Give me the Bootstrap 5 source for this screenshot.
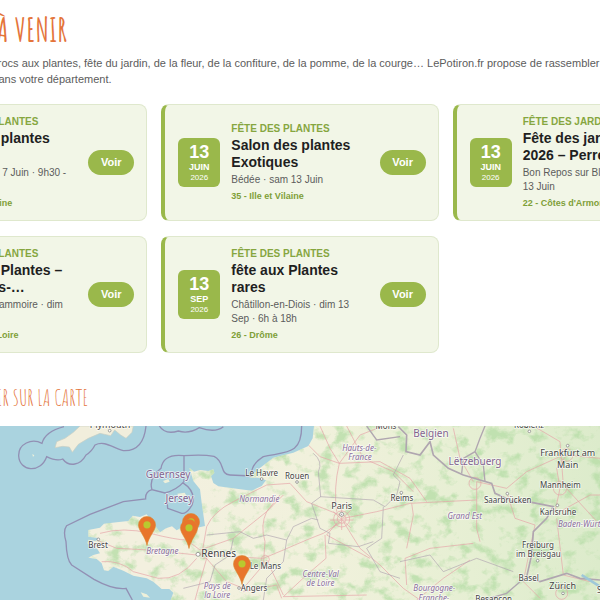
<!DOCTYPE html>
<html lang="fr">
<head>
<meta charset="utf-8">
<meta name="viewport" content="width=device-width, initial-scale=1">
<title>Fêtes des plantes à venir</title>
<link href="https://cdn.jsdelivr.net/npm/bootstrap@5.3.0/dist/css/bootstrap.min.css" rel="stylesheet">
<style>
body{font-family:"Liberation Sans",Arial,sans-serif;color:#5c5c5c;background:#fff}
.agenda{margin:0 -130px}
.display-title{font-family:"Amatic SC","Liberation Sans",sans-serif;color:#e4743a;text-transform:uppercase;text-align:right;white-space:nowrap}
h1.display-title{font-size:33px;line-height:32px;font-weight:700;margin:13px 0 10px;width:197px}
h2.display-title{font-size:22px;line-height:26px;font-weight:400;margin:32px 0 15px;width:218px}
.intro{font-size:11px;line-height:16px;margin:0 0 17px;white-space:nowrap}
.events{display:grid;grid-template-columns:repeat(3,minmax(0,1fr));gap:15px 14px}
.event{background:#f2f6e7;border:1px solid #dfe8cd;border-left:4px solid #9ab84b;border-radius:8px;padding:10px 12px 10px 13px;min-height:117px;gap:11px}
.event-text{white-space:nowrap}
.event-date{width:42px;height:49px;border-radius:6px;background:#9ab84b;color:#fff;flex:none}
.day{font-size:18px;line-height:20px;font-weight:700}
.month{font-size:9px;line-height:11px;font-weight:700}
.year{font-size:8px;line-height:10px}
.kind{font-size:10px;line-height:13px;font-weight:700;color:#86a63f;margin-bottom:2px}
.event h3{font-size:14px;line-height:17px;font-weight:700;color:#1f1f1f;margin:0 0 2px}
.meta{font-size:10px;line-height:14px;margin-bottom:3px}
.dept{font-size:9px;line-height:13px;font-weight:700;color:#7f9f38}
.btn-see{background:#9ab84b;color:#fff;font-size:11px;line-height:17px;font-weight:700;padding:4px 12px;border:0;border-radius:13px;flex:none;width:46px}
.map{background:#aad3df;min-height:174px}
.map-art{min-height:174px}
.map-art text{font-family:"Noto Sans",sans-serif;font-size:27px;fill:#444;text-anchor:middle;paint-order:stroke;stroke:#fff;stroke-opacity:.7;stroke-width:5px;stroke-linejoin:round}
.map-art .region{font-style:italic;fill:#8b6f9c;font-size:24px}
.map-art .country{fill:#83648f;font-size:30px}
.map-art .city{font-size:30px}
.map-art .town{font-size:24px}
.road{fill:none;stroke:#e6a3a8;stroke-width:2}
.frontier{fill:none;stroke:#b0a6b0;stroke-width:3}
.maritime{fill:none;stroke:#9290b4;stroke-width:4}
.pin{position:absolute;width:18px;height:30px;padding:0;border:0;background:none}
.pin svg{display:block;width:18px;height:30px}
</style>
<script src="https://cdn.jsdelivr.net/npm/bootstrap@5.3.0/dist/js/bootstrap.bundle.min.js"></script>
</head>
<body class="d-flex flex-column min-vh-100 overflow-hidden">
<main class="agenda">
  <h1 class="display-title">Fêtes à venir</h1>
  <p class="intro">Bourse, fête des plantes, trocs aux plantes, fête du jardin, de la fleur, de la confiture, de la pomme, de la courge… LePotiron.fr propose de rassembler<br>les événements proches dans votre département.</p>
  <section class="events">
    <article class="event d-flex align-items-center">
      <div class="event-date d-flex flex-column align-items-center justify-content-center"><span class="day">7</span><span class="month">JUIN</span><span class="year">2026</span></div>
      <div class="event-text flex-grow-1"><div class="kind">FÊTE DES PLANTES</div><h3>Fête des plantes<br>Rennes</h3><div class="meta">Rennes · dim 7 Juin · 9h30 -<br>18h</div><div class="dept">35 - Ille et Vilaine</div></div>
      <button type="button" class="btn btn-see">Voir</button>
    </article>
    <article class="event d-flex align-items-center">
      <div class="event-date d-flex flex-column align-items-center justify-content-center"><span class="day">13</span><span class="month">JUIN</span><span class="year">2026</span></div>
      <div class="event-text flex-grow-1"><div class="kind">FÊTE DES PLANTES</div><h3>Salon des plantes<br>Exotiques</h3><div class="meta">Bédée · sam 13 Juin</div><div class="dept">35 - Ille et Vilaine</div></div>
      <button type="button" class="btn btn-see">Voir</button>
    </article>
    <article class="event d-flex align-items-center">
      <div class="event-date d-flex flex-column align-items-center justify-content-center"><span class="day">13</span><span class="month">JUIN</span><span class="year">2026</span></div>
      <div class="event-text flex-grow-1"><div class="kind">FÊTE DES JARDINS</div><h3>Fête des jardins<br>2026 – Perret</h3><div class="meta">Bon Repos sur Blavet · sam<br>13 Juin</div><div class="dept">22 - Côtes d'Armor</div></div>
      <button type="button" class="btn btn-see">Voir</button>
    </article>
    <article class="event d-flex align-items-center">
      <div class="event-date d-flex flex-column align-items-center justify-content-center"><span class="day">27</span><span class="month">SEP</span><span class="year">2026</span></div>
      <div class="event-text flex-grow-1"><div class="kind">FÊTE DES PLANTES</div><h3>Fête des Plantes –<br>Soulaines-…</h3><div class="meta">Parc de la Grammoire · dim<br>27 Sep</div><div class="dept">49 - Maine et Loire</div></div>
      <button type="button" class="btn btn-see">Voir</button>
    </article>
    <article class="event d-flex align-items-center">
      <div class="event-date d-flex flex-column align-items-center justify-content-center"><span class="day">13</span><span class="month">SEP</span><span class="year">2026</span></div>
      <div class="event-text flex-grow-1"><div class="kind">FÊTE DES PLANTES</div><h3>fête aux Plantes<br>rares</h3><div class="meta">Châtillon-en-Diois · dim 13<br>Sep · 6h à 18h</div><div class="dept">26 - Drôme</div></div>
      <button type="button" class="btn btn-see">Voir</button>
    </article>
  </section>
  <h2 class="display-title">À venir sur la carte</h2>
</main>
<section class="map position-relative flex-grow-1 d-flex overflow-hidden" aria-label="Carte des fêtes">
  <svg class="map-art w-100" viewBox="0 33 1800 522" preserveAspectRatio="xMinYMin slice">
    <defs>
      <linearGradient id="veg"><stop offset=".15" stop-color="#f3f0df"/><stop offset=".45" stop-color="#f1f1dc"/><stop offset=".75" stop-color="#e6efd3"/><stop offset="1" stop-color="#dcebcb"/></linearGradient>
      <filter id="woods" x="0" y="0" width="100%" height="100%" color-interpolation-filters="sRGB"><feTurbulence type="fractalNoise" baseFrequency=".022 .026" numOctaves="5" seed="8" result="n"/><feColorMatrix in="n" values="0 0 0 0 .72  0 0 0 0 .87  0 0 0 0 .66  4 0 0 0 -2"/><feComposite in2="SourceGraphic" operator="in"/></filter>
      <path id="france" d="M265 345L300 338L312 326L350 322L385 318L398 302L420 306L440 298L456 320L480 352L498 340L516 334L530 346L548 336L575 342L615 333L605 263L600 223L580 198L568 158L582 170L600 165L625 168L640 163L643 174L633 183L640 204L655 214L710 221L755 227L785 213L798 196L775 188L748 188L775 163L820 128L880 113L925 93L938 70L942 33H1800V555H512L520 533L508 522L485 522L460 500L440 490L400 482L370 467L340 455L325 468L312 466L305 445L290 432L265 428L280 420L300 415L292 402L262 385L266 374L285 378L300 370L265 365Z"/>
      <clipPath id="land"><use href="#france"/></clipPath>
    </defs>
    <use href="#france" fill="url(#veg)"/>
    <use href="#france" filter="url(#woods)" opacity=".8"/>
    <path d="M165 98L170 80L195 70L220 52L240 33H400L396 52L378 70L362 60L344 45L332 62L300 55L265 70L235 88L217 112L208 96L188 94Z" fill="#f1eedc" stroke="#c8cfc2" stroke-width="2"/>
    <g fill="#eef0da"><path d="M489 198l16-6 4 8-14 5zM532 236l22-3 6 10-24 3zM422 532l18 6 10 10-20-3zM97 117l6 4-4 5z"/></g>
    <g class="maritime">
      <path d="M192 35Q135 50 126 85C95 68 55 87 56 122C58 170 122 176 140 125Q170 140 188 132C208 158 242 150 258 120Q275 110 285 90C315 75 340 100 370 107Q430 110 438 33"/>
      <path d="M478 33Q495 60 535 48Q565 58 598 38Q645 55 670 35M552 122V200Q530 225 495 234L456 224Q445 190 483 160Q490 115 552 122Q610 118 642 124C676 140 658 178 690 180L755 183Q750 150 790 125C860 110 905 120 905 33M456 224Q435 230 437 252L370 260L270 298L200 332C190 345 192 360 198 380Q200 435 215 450L282 493Q340 525 378 520L397 555M548 203Q590 230 576 270Q560 298 545 295L503 280Q500 250 503 238"/>
    </g>
    <g clip-path="url(#land)">
      <g class="road">
        <path d="M300 355Q370 335 450 355T560 375L600 405L700 370L800 290L840 240M290 375L350 400L450 405L590 420M305 440Q360 435 400 470L475 490Q540 495 590 430M612 415L690 425L790 430L850 405Q930 370 970 355L1025 320M605 420L620 335Q640 290 700 260L800 210L870 205L920 260L1020 300M620 430L600 500L585 555M615 425L680 500L730 520M730 520L790 450L795 380Q780 330 800 290L850 240M730 530L830 510L845 550M800 435L850 540M975 360L978 430L920 480L850 545L1100 540"/>
        <path d="M925 90L960 125L1018 145L1080 60L1150 33M1018 145Q1000 220 1010 290M960 33L990 100L1018 145L1140 140L1230 190L1280 260M1040 33L1090 130L1180 170L1240 230M1030 310L1130 290L1230 265L1430 255M1030 320L1080 400L1140 450L1210 520L1260 555M1010 325L980 360L1110 430M1220 510L1215 430L1290 400L1420 385M1235 265L1240 300L1220 400M1410 435L1330 490L1250 555M1430 200V340L1440 380M1430 200L1520 220L1580 170L1690 120M1520 230L1545 310L1605 330L1590 400L1570 500L1620 550M1665 290L1680 220L1670 160L1700 120L1800 130M1680 290L1770 240L1800 240M1670 310L1690 480L1770 500M1600 33L1680 80L1690 210L1800 330M1420 200L1380 130L1360 40"/>
        <circle cx="1025" cy="312" r="24"/><circle cx="1025" cy="312" r="13"/><path d="M990 315h70M1025 280v65M1000 290l52 48M1052 286l-52 50"/>
        <circle cx="615" cy="417" r="13"/><circle cx="1680" cy="220" r="20"/><circle cx="1700" cy="120" r="19"/><circle cx="1425" cy="205" r="18"/><circle cx="1685" cy="535" r="18"/><circle cx="796" cy="433" r="12"/>
      </g>
      <g class="frontier">
        <path d="M940 115Q970 140 955 170L962 245L935 265L960 340L990 355L985 385L1075 395L1120 380M960 245L1120 255L1155 275L1190 240L1200 200L1180 180L1210 120M620 360L720 350L760 370L800 360L860 375L880 335L935 310L955 315M700 370L690 420L645 450L630 500L550 520M860 375L850 440L800 490L790 555M1150 275L1145 370L1100 400L1140 470L1200 490M1200 440L1290 420L1330 470L1430 430L1540 470" stroke-width="2"/>
        <path d="M1195 35L1220 60L1218 110L1260 120L1290 80L1300 120L1345 160L1390 180L1440 195L1475 205L1485 235L1540 260L1595 262L1660 275L1640 310L1600 350L1595 420L1580 485L1620 500L1700 475L1740 490L1800 495" stroke-width="5"/>
        <path d="M1385 175L1390 130L1425 110L1440 70L1455 33M1425 110L1450 150L1455 200M1560 500L1520 535L1450 555M1100 33L1130 75L1200 65" stroke-width="4"/>
      </g>
      <path d="M1745 480L1800 515" fill="none" stroke="#9fc8d8" stroke-width="8"/>
    </g>
    <g>
      <text class="country" x="504" y="189">Guernsey</text><text class="country" x="538" y="260">Jersey</text><text class="country" x="1293" y="67">Belgien</text><text class="country" x="1425" y="151">Lëtzebuerg</text>
      <text x="330" y="40">Plymouth</text><text class="town" x="1158" y="41">Mons</text><text class="town" x="1587" y="40">Koblenz</text>
      <text class="town" x="294" y="398">Brest</text><text class="town" x="785" y="183">Le Havre</text><text class="town" x="891" y="192">Rouen</text><text x="1025" y="283">Paris</text>
      <text class="city" x="656" y="427">Rennes</text><text class="town" x="796" y="461">Le Mans</text><text class="town" x="762" y="529">Angers</text><text class="town" x="1206" y="257">Reims</text>
      <text x="1703" y="123">Frankfurt am</text><text x="1703" y="158">Main</text><text class="town" x="1681" y="219">Mannheim</text><text class="town" x="1523" y="263">Saarbrücken</text><text class="town" x="1674" y="299">Karlsruhe</text>
      <text class="town" x="1614" y="399">Freiburg</text><text class="town" x="1615" y="426">im Breisgau</text><text class="town" x="1586" y="497">Basel</text><text x="1688" y="523">Zürich</text><text class="town" x="1481" y="562">Besançon</text><text class="town" x="1805" y="535">St.</text>
      <text class="region" x="487" y="416">Bretagne</text><text class="region" x="778" y="261">Normandie</text><text class="region" x="1078" y="108">Hauts-de-</text><text class="region" x="1080" y="136">France</text><text class="region" x="962" y="485">Centre-Val</text><text class="region" x="961" y="513">de Loire</text>
      <text class="region" x="652" y="522">Pays de</text><text class="region" x="652" y="549">la Loire</text><text class="region" x="1394" y="313">Grand Est</text><text class="region" x="1758" y="335">Baden-Württem</text><text class="region" x="1303" y="529">Bourgogne-</text><text class="region" x="1302" y="557">Franche-</text>
    </g>
    <g fill="#fff" stroke="#777" stroke-width="2"><circle cx="594" cy="418" r="6"/><circle cx="1025" cy="298" r="6"/><circle cx="1025" cy="298" r="1"/><circle cx="329" cy="47" r="4"/><circle cx="295" cy="373" r="4"/><circle cx="785" cy="192" r="4"/><circle cx="891" cy="201" r="4"/><circle cx="717" cy="519" r="4"/><circle cx="1204" cy="233" r="4"/><circle cx="1522" cy="236" r="4"/><circle cx="1672" cy="271" r="4"/><circle cx="1703" cy="92" r="4"/><circle cx="1588" cy="49" r="4"/><circle cx="1613" cy="437" r="4"/><circle cx="1689" cy="535" r="4"/></g>
  </svg>
  <svg class="d-none"><symbol id="pin" viewBox="0 0 18 30"><path d="M9 .5A8.5 8.5 0 0 0 .5 9C.5 15 7.2 20 9 29.500C10.800 20 17.500 15 17.500 9A8.500 8.500 0 0 0 9 .5Z" fill="#e8752c" stroke="#d98a34" stroke-width=".6"/><circle cx="9" cy="8.800" r="3.600" fill="#b9c92f"/></symbol></svg>
  <button type="button" class="pin" style="left:182px;top:87px" aria-label="Côtes d'Armor"><svg><use href="#pin"/></svg></button>
  <button type="button" class="pin" style="left:180px;top:93px" aria-label="Bédée"><svg><use href="#pin"/></svg></button>
  <button type="button" class="pin" style="left:138px;top:90px" aria-label="Bon Repos sur Blavet"><svg><use href="#pin"/></svg></button>
  <button type="button" class="pin" style="left:233px;top:129px" aria-label="Maine et Loire"><svg><use href="#pin"/></svg></button>
</section>
</body>
</html>
